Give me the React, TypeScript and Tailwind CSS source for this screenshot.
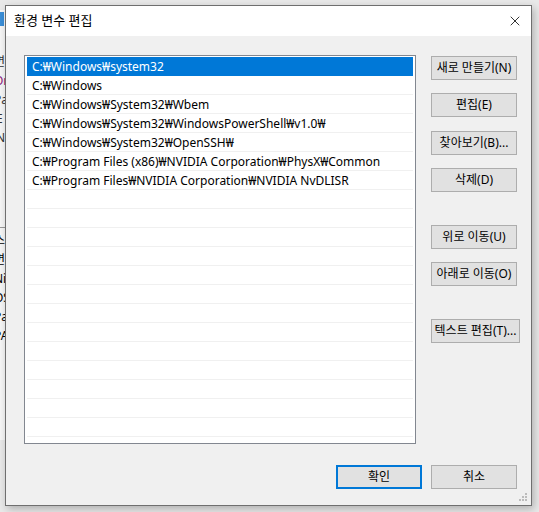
import { X } from "lucide-react";

const PATHS = [
  "C:₩Windows₩system32",
  "C:₩Windows",
  "C:₩Windows₩System32₩Wbem",
  "C:₩Windows₩System32₩WindowsPowerShell₩v1.0₩",
  "C:₩Windows₩System32₩OpenSSH₩",
  "C:₩Program Files (x86)₩NVIDIA Corporation₩PhysX₩Common",
  "C:₩Program Files₩NVIDIA Corporation₩NVIDIA NvDLISR",
];

const SIDE_BUTTONS = [
  { label: "새로 만들기(N)", cls: "mt-px w-[86px]" },
  { label: "편집(E)", cls: "mt-[13px] w-[86px]" },
  { label: "찾아보기(B)...", cls: "mt-[14px] w-[86px]" },
  { label: "삭제(D)", cls: "mt-[13px] w-[86px]" },
  { label: "위로 이동(U)", cls: "mt-[33px] w-[86px]" },
  { label: "아래로 이동(O)", cls: "mt-[13px] w-[86px]" },
  { label: "텍스트 편집(T)...", cls: "mt-[33px] w-[89px]" },
];

const FONT = "font-['Noto_Sans','Noto_Sans_CJK_KR',sans-serif]";

export default function App() {
  const rows = Array.from({ length: 20 }, (_, i) => PATHS[i] ?? "");

  return (
    <div className={`relative w-[539px] h-[512px] overflow-hidden bg-[#e9e9e9] ${FONT} text-[12px] text-black`}>
      {/* window behind */}
      <div className="absolute left-0 top-[10px] w-[20px] h-[430px] bg-[#f6f6f6] text-[12px] leading-[19px]">
        <div className="w-[4px] h-[14px] mt-[2px] bg-[#3c8fd8]" />
        <div className="mt-[26px] text-[#333]">
          <div className="-ml-[6px]">변</div>
          <div className="-ml-[6px] text-[#8a1a7a]">Or</div>
          <div className="-ml-[6px]">Pa</div>
          <div className="-ml-[4px]">E</div>
          <div className="-ml-[4px]">N</div>
        </div>
        <div className="mt-[80px] border-t border-[#999]" />
        <div className="-ml-[6px] mt-[3px]">스</div>
        <div className="-ml-[6px]">변</div>
        <div className="-ml-[6px]">Ni</div>
        <div className="-ml-[6px]">OS</div>
        <div className="-ml-[6px]">Pa</div>
        <div className="-ml-[6px]">PA</div>
      </div>

      {/* dialog */}
      <div className="absolute left-[5px] top-[5px] w-[527px] h-[501px] border border-[#6f6f6f] bg-[#f0f0f0] shadow-[2px_3px_8px_rgba(0,0,0,0.25)] flex flex-col">
        {/* title bar */}
        <div className="h-[30px] bg-white flex items-center justify-between pl-[8px] pr-[8px]">
          <span className="text-[13px]">환경 변수 편집</span>
          <X size={16} strokeWidth={1.2} />
        </div>

        {/* body */}
        <div className="flex-1 relative pl-[18px] pt-[19px]">
          <div className="flex">
            <div className="w-[392px] h-[389px] border border-[#828790] bg-white px-[2px] pt-px overflow-hidden">
              {rows.map((p, i) => (
                <div
                  key={i}
                  className={[
                    "h-[19px] leading-[19px] pl-[5px] border-b whitespace-nowrap",
                    i === 0 ? "bg-[#0078d7] text-white border-[#0078d7]" : "border-[#f0f0f0]",
                  ].join(" ")}
                >
                  {p}
                </div>
              ))}
            </div>

            <div className="ml-[15px] flex flex-col items-start">
              {SIDE_BUTTONS.map((b) => (
                <div
                  key={b.label}
                  className={`${b.cls} h-[24px] border border-[#adadad] bg-[#e1e1e1] flex items-center justify-center whitespace-nowrap`}
                >
                  {b.label}
                </div>
              ))}
            </div>
          </div>

          <div className="flex justify-end gap-[9px] mt-[21px] pr-[14px]">
            <div className="w-[86px] h-[24px] border-2 border-[#0078d7] bg-[#e1e1e1] flex items-center justify-center">
              확인
            </div>
            <div className="w-[86px] h-[24px] border border-[#adadad] bg-[#e1e1e1] flex items-center justify-center">
              취소
            </div>
          </div>

          {/* size grip */}
          <svg className="absolute right-[3px] bottom-[3px]" width="9" height="9" viewBox="0 0 9 9">
            <rect x="6" y="0" width="2" height="2" fill="#bcbcbc" />
            <rect x="3" y="3" width="2" height="2" fill="#bcbcbc" />
            <rect x="6" y="3" width="2" height="2" fill="#bcbcbc" />
            <rect x="0" y="6" width="2" height="2" fill="#bcbcbc" />
            <rect x="3" y="6" width="2" height="2" fill="#bcbcbc" />
            <rect x="6" y="6" width="2" height="2" fill="#bcbcbc" />
          </svg>
        </div>
      </div>
    </div>
  );
}
